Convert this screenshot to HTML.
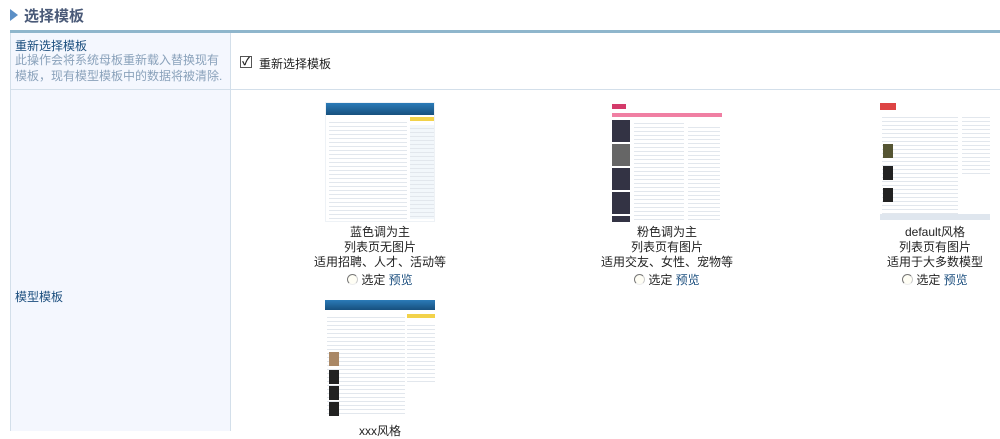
<!DOCTYPE html>
<html><head><meta charset="utf-8"><style>
*{margin:0;padding:0;box-sizing:border-box}
body{width:1000px;height:431px;overflow:hidden;background:#fff;font-family:"Liberation Sans","Noto Sans CJK SC",sans-serif;font-size:12px;color:#222;position:relative}
.abs{position:absolute}
.title{left:10px;top:5px;font-size:15px;font-weight:bold;color:#4a5a78}
.tri{left:10px;top:9px;width:0;height:0;border-top:6px solid transparent;border-bottom:6px solid transparent;border-left:8px solid #5b8fc6}
.topbar{left:10px;top:30px;width:990px;height:3px;background:#8fb6cc}
.left{left:10px;top:33px;width:221px;height:398px;background:#f4f7fe;border-right:1px solid #d3dfea;border-left:1px solid #d3dfea}
.hline{left:10px;top:89px;width:990px;height:1px;background:#d3dfea}
.lbl{color:#1b4e7e;font-size:12px}
.desc{color:#8aa2bb;font-size:12px;line-height:16px}
.thumb{width:110px;height:120px;background:#fff;border:1px solid #eef2f6;overflow:hidden}
.hd{height:12px;background:linear-gradient(#2b7bb8,#17507e)}
.lines{position:absolute;background:repeating-linear-gradient(#fff 0 3px,#e2e7ed 3px 4px)}
.cap{width:290px;text-align:center;font-size:12px;line-height:15px;color:#222}
.radio{display:inline-block;width:11px;height:11px;border-radius:50%;border:1px solid #777;border-bottom-color:#eee;border-right-color:#ccc;vertical-align:-1px;margin-right:3px;background:#fffef5}
.pv{color:#1b4e7e}
</style></head><body>
<div class="abs tri"></div>
<div class="abs title" style="left:24px">选择模板</div>
<div class="abs topbar"></div>
<div class="abs left"></div>
<div class="abs hline"></div>
<div class="abs lbl" style="left:15px;top:37px">重新选择模板</div>
<div class="abs desc" style="left:15px;top:52px">此操作会将系统母板重新载入替换现有<br>模板，现有模型模板中的数据将被清除.</div>
<div class="abs" style="left:240px;top:56px;width:12px;height:12px;border:1px solid #555;background:#fff;font-size:11px;line-height:10px;text-align:center;font-weight:bold">✓</div>
<div class="abs" style="left:259px;top:55px;font-size:12px">重新选择模板</div>
<div class="abs lbl" style="left:15px;top:288px">模型模板</div>

<div class="abs thumb" style="left:325px;top:102px"><div class="hd"></div>
<div class="lines" style="left:3px;top:16px;width:78px;height:100px"></div>
<div class="abs" style="left:84px;top:14px;width:24px;height:4px;background:#f2d24a"></div>
<div class="lines" style="left:84px;top:22px;width:24px;height:94px;background:repeating-linear-gradient(#f2f7fb 0 3px,#e2e7ed 3px 4px)"></div></div>
<div class="abs cap" style="left:235px;top:225px">蓝色调为主<br>列表页无图片<br>适用招聘、人才、活动等</div>
<div class="abs cap" style="left:235px;top:273px"><span class="radio"></span>选定 <span class="pv">预览</span></div>

<div class="abs thumb" style="left:612px;top:102px;border:none">
<div class="abs" style="left:0;top:2px;width:14px;height:5px;background:#d43a6a"></div>
<div class="abs" style="left:0;top:11px;width:110px;height:4px;background:#f07fa3"></div>
<div class="abs" style="left:0;top:18px;width:18px;height:22px;background:#334"></div>
<div class="abs" style="left:0;top:42px;width:18px;height:22px;background:#666"></div>
<div class="abs" style="left:0;top:66px;width:18px;height:22px;background:#334"></div>
<div class="abs" style="left:0;top:90px;width:18px;height:22px;background:#334"></div>
<div class="abs" style="left:0;top:114px;width:18px;height:8px;background:#334"></div>
<div class="lines" style="left:22px;top:18px;width:50px;height:100px"></div>
<div class="lines" style="left:76px;top:22px;width:32px;height:98px"></div></div>
<div class="abs cap" style="left:522px;top:225px">粉色调为主<br>列表页有图片<br>适用交友、女性、宠物等</div>
<div class="abs cap" style="left:522px;top:273px"><span class="radio"></span>选定 <span class="pv">预览</span></div>

<div class="abs thumb" style="left:880px;top:100px;border:none">
<div class="abs" style="left:0;top:3px;width:16px;height:7px;background:#d44"></div>
<div class="lines" style="left:2px;top:14px;width:76px;height:100px"></div>
<div class="abs" style="left:3px;top:44px;width:10px;height:14px;background:#553"></div>
<div class="abs" style="left:3px;top:66px;width:10px;height:14px;background:#222"></div>
<div class="abs" style="left:3px;top:88px;width:10px;height:14px;background:#222"></div>
<div class="lines" style="left:82px;top:14px;width:28px;height:60px"></div>
<div class="abs" style="left:0;top:114px;width:110px;height:6px;background:#dfe6ee"></div></div>
<div class="abs cap" style="left:790px;top:225px">default风格<br>列表页有图片<br>适用于大多数模型</div>
<div class="abs cap" style="left:790px;top:273px"><span class="radio"></span>选定 <span class="pv">预览</span></div>

<div class="abs thumb" style="left:325px;top:300px;border:none"><div class="hd" style="height:10px"></div>
<div class="lines" style="left:2px;top:14px;width:78px;height:100px"></div>
<div class="abs" style="left:4px;top:52px;width:10px;height:14px;background:#a86"></div>
<div class="abs" style="left:4px;top:70px;width:10px;height:14px;background:#222"></div>
<div class="abs" style="left:4px;top:86px;width:10px;height:14px;background:#222"></div>
<div class="abs" style="left:4px;top:102px;width:10px;height:14px;background:#222"></div>
<div class="abs" style="left:82px;top:14px;width:28px;height:4px;background:#f2d24a"></div>
<div class="lines" style="left:82px;top:22px;width:28px;height:60px"></div></div>
<div class="abs cap" style="left:235px;top:424px">xxx风格</div>
</body></html>
